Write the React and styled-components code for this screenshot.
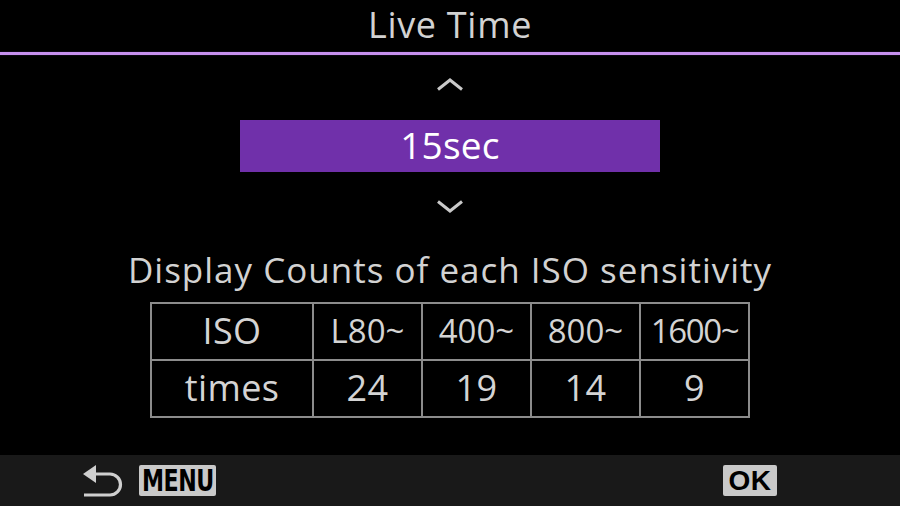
import styled, { createGlobalStyle } from 'styled-components';

const GlobalStyle = createGlobalStyle`
  html, body {
    margin: 0;
    padding: 0;
    background: #000;
  }
  body {
    font-family: "Open Sans", "Noto Sans", sans-serif;
  }
`;

const isoSteps = [
  { iso: 'L80~', times: 24 },
  { iso: '400~', times: 19 },
  { iso: '800~', times: 14 },
  { iso: '1600~', times: 9, tight: true },
];

const App = () => {
  return (
    <Screen>
      <GlobalStyle />
      <Header>Live Time</Header>
      <Divider />
      <Picker>
        <ArrowRow $height={65} $shift={6}>
          <Chevron $up />
        </ArrowRow>
        <ValueBar>15sec</ValueBar>
        <ArrowRow $height={68} $shift={0}>
          <Chevron />
        </ArrowRow>
      </Picker>
      <Caption>Display Counts of each ISO sensitivity</Caption>
      <CountTable>
        <tbody>
          <tr>
            <Cell $first>ISO</Cell>
            {isoSteps.map((s) => (
              <Cell key={s.iso} $head $tight={s.tight}>
                {s.iso}
              </Cell>
            ))}
          </tr>
          <tr>
            <Cell $first>times</Cell>
            {isoSteps.map((s) => (
              <Cell key={s.iso}>{s.times}</Cell>
            ))}
          </tr>
        </tbody>
      </CountTable>
      <Spacer />
      <Footer>
        <FooterGroup>
          <BackArrow />
          <Badge $wide>
            <BadgeText $narrow>MENU</BadgeText>
          </Badge>
        </FooterGroup>
        <Badge>
          <BadgeText>OK</BadgeText>
        </Badge>
      </Footer>
    </Screen>
  );
};

const Chevron = ({ $up }) => (
  <svg width="28" height="13" viewBox="0 0 28 13">
    <polyline
      points={$up ? '2,11.5 14,2 26,11.5' : '2,1.5 14,11 26,1.5'}
      fill="none"
      stroke="#c9c9c9"
      strokeWidth="3"
      strokeLinejoin="miter"
    />
  </svg>
);

const BackArrow = () => (
  <svg width="42" height="34" viewBox="0 0 42 34">
    <path
      d="M12 10 H28 A10.5 10.5 0 0 1 28 31 H2"
      fill="none"
      stroke="#cfcfcf"
      strokeWidth="3.2"
    />
    <polygon points="1,10 14,1 14,19" fill="#cfcfcf" />
  </svg>
);

const Screen = styled.div`
  width: 900px;
  height: 506px;
  display: flex;
  flex-direction: column;
  align-items: center;
  background: #000;
  overflow: hidden;
`;

const Header = styled.div`
  height: 52px;
  width: 100%;
  display: flex;
  align-items: center;
  justify-content: center;
  font-size: 36px;
  letter-spacing: 0.7px;
  color: #d2d2d2;
  padding-bottom: 3px;
  box-sizing: border-box;
`;

const Divider = styled.div`
  width: 100%;
  height: 3px;
  background: #c690ee;
  box-shadow: 0 0 1px #7a3ea8;
`;

const Picker = styled.div`
  display: flex;
  flex-direction: column;
  align-items: center;
`;

const ArrowRow = styled.div`
  height: ${(p) => p.$height}px;
  padding-bottom: ${(p) => p.$shift}px;
  box-sizing: border-box;
  display: flex;
  align-items: center;
  justify-content: center;
`;

const ValueBar = styled.div`
  width: 420px;
  height: 52px;
  background: #7030aa;
  color: #fff;
  font-size: 37px;
  letter-spacing: 0.2px;
  display: flex;
  align-items: center;
  justify-content: center;
  padding-bottom: 3px;
  box-sizing: border-box;
`;

const Caption = styled.div`
  height: 62px;
  display: flex;
  align-items: center;
  justify-content: center;
  font-size: 35px;
  letter-spacing: 1px;
  color: #d2d2d2;
  padding-bottom: 4px;
  box-sizing: border-box;
`;

const CountTable = styled.table`
  border-collapse: collapse;
  width: 598px;
  border: 2px solid #8c8c8c;
  table-layout: fixed;
`;

const Cell = styled.td`
  border: 2px solid #8c8c8c;
  width: ${(p) => (p.$first ? '160px' : '107px')};
  height: 52px;
  padding: 0 0 3px;
  text-align: center;
  color: #d4d4d4;
  font-size: ${(p) => (p.$head ? '33px' : '36px')};
  letter-spacing: ${(p) => (p.$tight ? '-1.4px' : p.$head ? '0' : '0.4px')};
  white-space: nowrap;
`;

const Spacer = styled.div`
  flex: 1;
`;

const Footer = styled.div`
  width: 100%;
  height: 51px;
  background: #191919;
  display: flex;
  align-items: center;
  justify-content: space-between;
  padding: 0 123px 0 82px;
  box-sizing: border-box;
`;

const FooterGroup = styled.div`
  display: flex;
  align-items: center;
  gap: 15px;
`;

const Badge = styled.div`
  width: ${(p) => (p.$wide ? '77px' : '54px')};
  height: 31px;
  background: #c9c9c9;
  border-radius: 2px;
  display: flex;
  align-items: center;
  justify-content: center;
`;

const BadgeText = styled.span`
  color: #000;
  font-family: ${(p) =>
    p.$narrow
      ? '"DejaVu Sans Condensed", "Liberation Sans Narrow", sans-serif'
      : '"Liberation Sans", Arial, sans-serif'};
  font-weight: 700;
  font-size: ${(p) => (p.$narrow ? '30px' : '28px')};
  line-height: 1;
  display: inline-block;
  margin: 0 ${(p) => (p.$narrow ? '-8px' : '0')};
  transform: ${(p) => (p.$narrow ? 'scaleX(0.82)' : 'none')};
  letter-spacing: ${(p) => (p.$narrow ? '-0.5px' : '0.5px')};
`;

export default App;
